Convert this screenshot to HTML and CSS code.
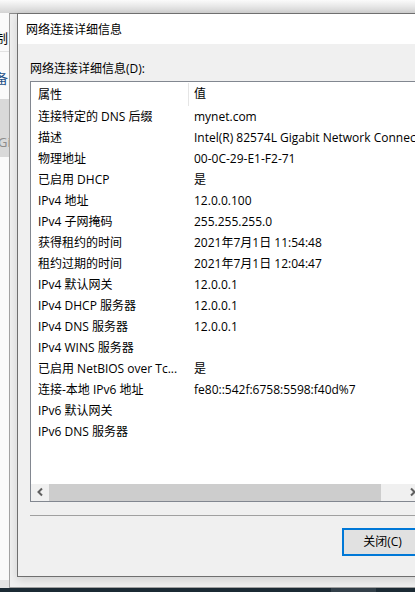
FILE: index.html
```html
<!DOCTYPE html>
<html lang="zh-CN">
<head>
<meta charset="utf-8">
<title>网络连接详细信息</title>
<link rel="stylesheet" href="styles.css">
</head>
<body>
<div class="desktop">
  <div class="backapp">
    <div class="ba-row ba-first"><span class="ba-text">制</span></div>
    <div class="ba-row ba-blue"><span class="ba-text">备</span></div>
    <div class="ba-row ba-sel"><span class="ba-gi">Gi</span></div>
  </div>
  <div class="parentwin"></div>
  <div class="dialog">
    <div class="titlebar">网络连接详细信息</div>
    <div class="body">
      <div class="label">网络连接详细信息(D):</div>
      <div class="list">
        <div class="head">
          <div class="hcell c1">属性</div>
          <div class="hcell c2">值</div>
        </div>
        <div class="rows">
          <div class="row"><div class="cell c1">连接特定的 DNS 后缀</div><div class="cell c2">mynet.com</div></div>
          <div class="row"><div class="cell c1">描述</div><div class="cell c2">Intel(R) 82574L Gigabit Network Connection</div></div>
          <div class="row"><div class="cell c1">物理地址</div><div class="cell c2">00-0C-29-E1-F2-71</div></div>
          <div class="row"><div class="cell c1">已启用 DHCP</div><div class="cell c2">是</div></div>
          <div class="row"><div class="cell c1">IPv4 地址</div><div class="cell c2">12.0.0.100</div></div>
          <div class="row"><div class="cell c1">IPv4 子网掩码</div><div class="cell c2">255.255.255.0</div></div>
          <div class="row"><div class="cell c1">获得租约的时间</div><div class="cell c2">2021年7月1日 11:54:48</div></div>
          <div class="row"><div class="cell c1">租约过期的时间</div><div class="cell c2">2021年7月1日 12:04:47</div></div>
          <div class="row"><div class="cell c1">IPv4 默认网关</div><div class="cell c2">12.0.0.1</div></div>
          <div class="row"><div class="cell c1">IPv4 DHCP 服务器</div><div class="cell c2">12.0.0.1</div></div>
          <div class="row"><div class="cell c1">IPv4 DNS 服务器</div><div class="cell c2">12.0.0.1</div></div>
          <div class="row"><div class="cell c1">IPv4 WINS 服务器</div><div class="cell c2"></div></div>
          <div class="row"><div class="cell c1">已启用 NetBIOS over Tc...</div><div class="cell c2">是</div></div>
          <div class="row"><div class="cell c1">连接-本地 IPv6 地址</div><div class="cell c2">fe80::542f:6758:5598:f40d%7</div></div>
          <div class="row"><div class="cell c1">IPv6 默认网关</div><div class="cell c2"></div></div>
          <div class="row"><div class="cell c1">IPv6 DNS 服务器</div><div class="cell c2"></div></div>
        </div>
        <div class="hscroll">
          <div class="sb-btn">
            <svg width="17" height="17" viewBox="0 0 17 17"><path d="M11 4.5 L7.5 8 L11 11.5" fill="none" stroke="#606060" stroke-width="2"/></svg>
          </div>
          <div class="sb-thumb"></div>
          <div class="sb-track"></div>
          <div class="sb-btn">
            <svg width="17" height="17" viewBox="0 0 17 17"><path d="M6 4.5 L9.5 8 L6 11.5" fill="none" stroke="#606060" stroke-width="2"/></svg>
          </div>
        </div>
      </div>
      <div class="sep"></div>
      <div class="footer">
        <button class="btn" type="button">关闭(C)</button>
      </div>
    </div>
  </div>
  <div class="taskbar"><div class="tb-seg"></div></div>
</div>
</body>
</html>
```

FILE: styles.css
```css
* { box-sizing: border-box; }

body {
  margin: 0;
  overflow: hidden;
  font-family: "Open Sans", "Noto Sans CJK SC", sans-serif;
  font-size: 12px;
  color: #000;
}

.desktop {
  position: relative;
  width: 415px;
  height: 592px;
  overflow: hidden;
  background: linear-gradient(to bottom, #fbfbfb 0px, #d3d3d3 13px, #e4e4e4 13px, #e4e4e4 100%);
}

/* window behind, on the far left */
.backapp {
  position: absolute;
  left: 0;
  top: 13px;
  width: 9px;
  height: 567px;
  background: #fafafa;
  overflow: hidden;
  display: flex;
  flex-direction: column;
}

.ba-row {
  height: 29px;
  display: flex;
  align-items: center;
  white-space: nowrap;
}

.ba-first {
  margin-top: 10px;
  border-bottom: 1px solid #e2e2e2;
}

.ba-blue {
  margin-top: 12px;
  height: 26px;
  color: #1d4f86;
}

.ba-text {
  font-family: "Noto Sans CJK SC", sans-serif;
  font-size: 13px;
  margin-left: -5px;
}

.ba-sel {
  margin-top: 9px;
  height: 58px;
  background: #d9d9d9;
  align-items: flex-end;
  padding-bottom: 6px;
}

.ba-gi {
  color: #8c8c8c;
  font-size: 13px;
  margin-left: -2px;
}

/* parent window */
.parentwin {
  position: absolute;
  left: 9px;
  top: 13px;
  width: 430px;
  height: 575px;
  background: #f0f0f0;
  border-left: 1px solid #a3a3a3;
  border-top: 1px solid #8a8a8a;
  border-bottom: 1px solid #a0a0a0;
}

/* dialog */
.dialog {
  position: absolute;
  left: 17px;
  top: 13px;
  width: 418px;
  border: 1px solid #6f6f6f;
  border-right: none;
  background: #f0f0f0;
  box-shadow: 0 3px 9px rgba(0, 0, 0, 0.14);
  display: flex;
  flex-direction: column;
}

.titlebar {
  height: 30px;
  line-height: 30px;
  padding-left: 8px;
  background: #fff;
  font-family: "Noto Sans CJK SC", sans-serif;
  font-size: 12px;
}

.body {
  padding: 17px 12px 20px 12px;
  display: flex;
  flex-direction: column;
}

.label {
  height: 16px;
  line-height: 16px;
  margin-bottom: 4px;
}

.list {
  height: 421px;
  border: 1px solid #828790;
  background: #fff;
  display: flex;
  flex-direction: column;
  overflow: hidden;
}

.head {
  height: 24px;
  display: grid;
  grid-template-columns: 158px 1fr;
  flex: none;
}

.hcell {
  line-height: 24px;
  white-space: nowrap;
}

.hcell.c1 {
  padding-left: 7px;
  border-right: 1px solid #e5e5e5;
  margin: 1px 0 0 0;
  line-height: 23px;
}

.hcell.c2 {
  padding-left: 5px;
}

.rows {
  flex: 1;
  display: flex;
  flex-direction: column;
}

.row {
  height: 21px;
  display: grid;
  grid-template-columns: 158px 1fr;
}

.cell {
  line-height: 21px;
  white-space: nowrap;
  overflow: hidden;
}

.cell.c1 {
  padding-left: 7px;
}

.cell.c2 {
  padding-left: 5px;
}

.hscroll {
  height: 17px;
  flex: none;
  display: flex;
  background: #f0f0f0;
}

.sb-btn {
  width: 17px;
  height: 17px;
  flex: none;
}

.sb-btn svg {
  display: block;
}

.sb-thumb {
  width: 332px;
  margin-left: 1px;
  background: #cdcdcd;
  flex: none;
}

.sb-track {
  flex: 1;
}

.sep {
  margin-top: 13px;
  height: 1px;
  background: #a0a0a0;
}

.footer {
  margin-top: 12px;
  display: flex;
  justify-content: flex-end;
}

.btn {
  width: 81px;
  height: 28px;
  border: 2px solid #0078d7;
  background: #e1e1e1;
  font-family: "Open Sans", "Noto Sans CJK SC", sans-serif;
  font-size: 12px;
  color: #000;
  padding: 0;
  margin: 0;
  line-height: 24px;
}

.taskbar {
  position: absolute;
  left: 0;
  bottom: 0;
  width: 415px;
  height: 4px;
  background: #1b2a34;
  display: flex;
}

.tb-seg {
  margin-left: 331px;
  width: 45px;
  background: #323f49;
}
```
